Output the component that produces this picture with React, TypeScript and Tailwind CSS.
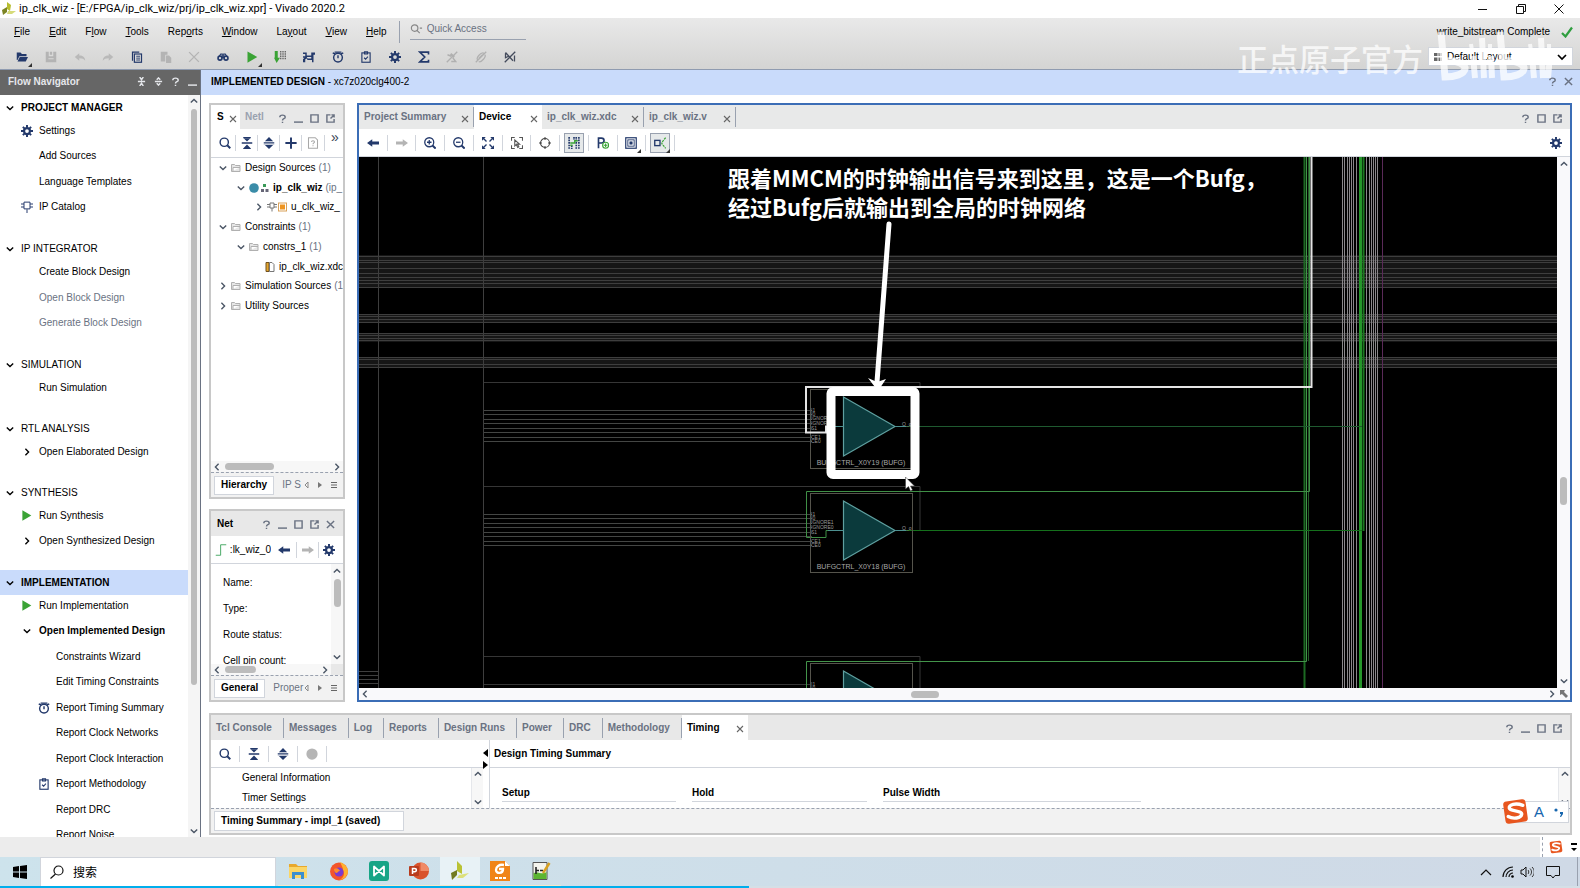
import type { ReactNode } from "react";
import clsx from "clsx";

const NAVY = "#23396b";
const GREEN = "#3aa335";

const glyphs: Record<string, ReactNode> = {
  folderOpen: (
    <g fill={NAVY}>
      <path d="M1 2h5l2 2h6v3H4.500L2 12H1z" />
      <path d="M5 8h11l-3 6H2z" />
    </g>
  ),
  save: <path fill="#b4b4b4" d="M1 1h4v6h6V1h4v14H1zM6.500 1h3v4h-3zM4.500 9.500v1.500h7V9.500z" fillRule="evenodd" />,
  undo: <path fill="#b9b9b9" d="M1 8l6-5v3c5 0 7.500 2 8 7-1.500-2.500-4-3.500-8-3.500V13z" />,
  redo: <path fill="#b9b9b9" d="M15 8L9 3v3c-5 0-7.500 2-8 7 1.500-2.500 4-3.500 8-3.500V13z" />,
  copy: (
    <g stroke={NAVY} fill="none" strokeWidth="1.600">
      <path d="M11 1.500H2v11.500" />
      <rect x="4.500" y="4" width="9.500" height="11" />
      <path d="M7 7h5M7 9.500h5M7 12h5" strokeWidth="1.200" />
    </g>
  ),
  paste: <path fill="#b4b4b4" d="M1 1h9v4H7v9H1zM8 6h4l3 3v7H8z" />,
  cross: <path stroke="#b4b4b4" strokeWidth="1.800" d="M1.500 1.500l13 13M14.500 1.500l-13 13" />,
  binoculars: (
    <g fill="none" stroke={NAVY} strokeWidth="2.200">
      <circle cx="4" cy="9.500" r="2.600" />
      <circle cx="12" cy="9.500" r="2.600" />
      <path d="M3 7l2-3h2v5h2V4h2l2 3" strokeWidth="1.600" />
    </g>
  ),
  play: <path fill={GREEN} d="M2 .5L15 8 2 15.500z" />,
  bitstream: (
    <g>
      <path fill={GREEN} d="M1 0h4v9h3l-4.500 7L0 9h1z" />
      <path stroke="#555" strokeWidth="1.600" strokeDasharray="2 1" d="M9 0v12M12 0v12M15 0v12" />
    </g>
  ),
  hardware: (
    <g fill={NAVY}>
      <path d="M0 2h5v4h6V2h5v3h-2v10h-2v-3H6l-1-2-2 1v4H0v-4l2-2H0V7h3V4H0z" />
      <path fill="#e0e0e0" d="M5 8h6v2H6z" />
    </g>
  ),
  clock: (
    <g stroke={NAVY} strokeWidth="1.900" fill="none">
      <circle cx="8" cy="8.800" r="5.800" />
      <path d="M8 5.500v4M1 2.500l3 1.500M15 2.500L12 4M3.500 1.500h9" />
    </g>
  ),
  clipboard: (
    <g stroke={NAVY} strokeWidth="1.500" fill="none">
      <rect x="2.500" y="2.500" width="11" height="12.500" />
      <path d="M6 1h4v3H6zM5.500 9l2 2 3-3.500" />
    </g>
  ),
  gear: (
    <g>
      <circle cx="8" cy="8" r="4" fill="none" stroke={NAVY} strokeWidth="3" />
      <path
        stroke={NAVY}
        strokeWidth="2.600"
        d="M8 0v3.500M8 12.500v3.500M0 8h3.500M12.500 8h3.500M2.500 2.500l2 2M11.500 11.500l2 2M13.500 2.500l-2 2M4.500 11.500l-2 2"
      />
    </g>
  ),
  sigma: <path fill="none" stroke={NAVY} strokeWidth="2.200" d="M14 4.500V1.500H2.500L9 8l-6.500 6.500H14v-3" />,
  noPen: (
    <g stroke="#b0b0b0" strokeWidth="1.800" fill="none">
      <path d="M1 15L15 1M2 5l5 2M9 9l4 5H7" />
      <path d="M6 4l5 4" strokeWidth="3" />
    </g>
  ),
  noLink: (
    <g stroke="#b0b0b0" strokeWidth="1.700" fill="none">
      <path d="M1 15L15 1M4 12c-4-2 4-11 8-9M13 5c3 2-5 11-8 9M5 10l5-5" />
    </g>
  ),
  noMark: (
    <g stroke="#444b5c" strokeWidth="1.700" fill="none">
      <path d="M1 15L15 1M2 2l10 11M2 3v6l4-2M14 6v8" />
    </g>
  ),
  search: (
    <g stroke={NAVY} strokeWidth="1.900" fill="none">
      <circle cx="7" cy="7" r="5.500" />
      <path d="M11 11l4 4" strokeWidth="2.600" />
    </g>
  ),
  collapse: (
    <g fill={NAVY}>
      <path d="M1 7h14v2H1zM3 0h10v1.500H3zM3 14.500h10V16H3z" />
      <path d="M3.500 1.500h9L8 6zM3.500 14.500h9L8 10z" />
    </g>
  ),
  expand: (
    <g fill={NAVY}>
      <path d="M2.500 5.500L8 0l5.500 5.500zM2.500 10.500L8 16l5.500-5.500zM1 6.500h14v1H1zM1 8.500h14v1H1z" />
    </g>
  ),
  plus: <path stroke={NAVY} strokeWidth="2.600" d="M8 .5v15M.5 8h15" />,
  unknown: (
    <g stroke="#a8a8a8" strokeWidth="1.400" fill="none">
      <path d="M2 1h9l3 3v11H2z" />
      <path d="M6 6.500c0-2 4-2 4 0 0 1.500-2 1.300-2 3M8 11v1.300" />
    </g>
  ),
  dot: <circle cx="8" cy="8" r="7.500" fill="#b5b5b5" />,
  back: <path fill={NAVY} d="M0 8l7-5v3h9v4H7v3z" />,
  forward: <path fill="#b4b4b4" d="M16 8L9 3v3H0v4h9v3z" />,
  zoomIn: (
    <g stroke={NAVY} strokeWidth="1.700" fill="none">
      <circle cx="7" cy="7" r="6" />
      <path d="M7 4v6M4 7h6" />
      <path d="M11 11l4.500 4.500" strokeWidth="2.600" />
    </g>
  ),
  zoomOut: (
    <g stroke={NAVY} strokeWidth="1.700" fill="none">
      <circle cx="7" cy="7" r="6" />
      <path d="M4 7h6" />
      <path d="M11 11l4.500 4.500" strokeWidth="2.600" />
    </g>
  ),
  fit: (
    <g>
      <path fill={NAVY} d="M0 0h5L0 5zM16 0h-5l5 5zM0 16h5l-5-5zM16 16h-5l5-5z" />
      <path stroke={NAVY} strokeWidth="1.800" d="M2 2l4 4M14 2l-4 4M2 14l4-4M14 14l-4-4" />
    </g>
  ),
  fitSelection: (
    <g stroke="#555" strokeWidth="1.400" fill="none">
      <path d="M.7 5V.7H5M15.300 5V.7H11M.7 11v4.300H5M15.300 11v4.300H11" />
      <path d="M5 4v8l2-2 2 4 1.500-1-2-3.500h3z" />
    </g>
  ),
  target: (
    <g stroke="#444" strokeWidth="1.400" fill="none">
      <circle cx="8" cy="8" r="6" />
      <path d="M8 0v4M8 12v4M0 8h4M12 8h4" />
    </g>
  ),
  routing: (
    <g fill="none">
      <path stroke={NAVY} strokeWidth="2.200" strokeDasharray="2.200 1.200" d="M1.500 0v16M8 0v4M14.500 0v16M5 11v5M11 0v16" />
      <path stroke={GREEN} strokeWidth="1.800" d="M3 8h6V5h4M3 11h3" />
    </g>
  ),
  place: (
    <g fill="none">
      <path stroke={NAVY} strokeWidth="2.200" d="M2 15V1.500h4c4.500 0 4.500 6.500 0 6.500H2" />
      <circle cx="11.500" cy="11" r="4" fill="#fff" stroke={GREEN} strokeWidth="1.500" />
      <path stroke={GREEN} strokeWidth="1.500" d="M11.500 8.500v5M9 11h5" />
    </g>
  ),
  chip: (
    <g stroke={NAVY} fill="none">
      <rect x="1" y="1" width="14" height="14" strokeWidth="1.600" />
      <rect x="3.800" y="3.800" width="8.400" height="8.400" strokeWidth="1.200" />
      <rect x="6.500" y="6.500" width="3" height="3" fill={NAVY} />
    </g>
  ),
  fanout: (
    <g fill="none">
      <rect x="1" y="4.500" width="7" height="7" stroke={NAVY} strokeWidth="1.800" />
      <path stroke={GREEN} strokeWidth="1.600" d="M15.500 1l-5 6v2l5 6" strokeDasharray="3 1" />
    </g>
  ),
  ip: (
    <g stroke={NAVY} strokeWidth="1.300" fill="none">
      <path d="M4 1.500h8v9H4zM0 4h4M0 8h4M12 4h4M12 8h4M8 11v5" />
    </g>
  ),
  edge: <path fill="none" stroke="#3aa35a" strokeWidth="1.200" d="M1 15h6.500V1H15" />,
};

function Icon({ name, className = "size-3" }: { name: string; className?: string }) {
  return (
    <svg viewBox="0 0 16 16" className={clsx("shrink-0", className)} aria-hidden="true">
      {glyphs[name]}
    </svg>
  );
}

function Chevron({ dir, className = "size-2" }: { dir: "up" | "down" | "left" | "right"; className?: string }) {
  const d = {
    up: "M1 7l4-4 4 4",
    down: "M1 3l4 4 4-4",
    left: "M7 1L3 5l4 4",
    right: "M3 1l4 4-4 4",
  }[dir];
  return (
    <svg viewBox="0 0 10 10" className={clsx("shrink-0", className)} aria-hidden="true">
      <path d={d} fill="none" stroke="currentColor" strokeWidth="1.700" />
    </svg>
  );
}

function MenuCorner() {
  return (
    <svg viewBox="0 0 4 4" className="absolute -right-1 -bottom-1 size-1" aria-hidden="true">
      <path d="M4 0v4H0z" fill="#333" />
    </svg>
  );
}

const controlPaths: Record<string, string> = {
  Help: "M2 3.500C2 .5 8 .5 8 3.500 8 5.500 5 5 5 7.200M5 8.500V10",
  Minimize: "M0 9h10",
  Maximize: "M1 1h8v8H1z",
  Float: "M5 1H1v8h8V5.500M5 5l4-4M6 1h3v3",
  Close: "M1 1l8 8M9 1L1 9",
  Collapse: "M1 5h8M3 0l2 3 2-3M3 10l2-3 2 3",
  Expand: "M1 5h8M3 3l2-2 2 2M3 7l2 2 2-2",
};

function Controls({ names, className }: { names: string[]; className?: string }) {
  return (
    <div className={clsx("flex items-center", className)}>
      {names.map((n) => (
        <button key={n} aria-label={n} className="flex h-4 w-4 items-center justify-center">
          <svg viewBox="0 0 10 10" className="size-[9px]">
            <path d={controlPaths[n]} fill="none" stroke="currentColor" strokeWidth="1.600" />
          </svg>
        </button>
      ))}
    </div>
  );
}

function TabClose({ label }: { label: string }) {
  return (
    <button aria-label={label} className="pt-[3px]">
      <svg viewBox="0 0 8 8" className="size-2">
        <path d="M1 1l6 6M7 1L1 7" stroke="#666" strokeWidth="1.100" />
      </svg>
    </button>
  );
}

function ToolButton({ name, label, className }: { name: string; label: string; className?: string }) {
  return (
    <div className={clsx("flex h-4 items-center justify-center border-r border-gray-300", className)}>
      <button aria-label={label}>
        <Icon name={name} />
      </button>
    </div>
  );
}

function VScroll({ children }: { children?: ReactNode }) {
  return (
    <div className="flex w-3 shrink-0 flex-col items-center justify-between border-l border-gray-200 bg-[#f7f7f7] py-0.5 text-gray-600">
      <Chevron dir="up" />
      {children}
      <Chevron dir="down" />
    </div>
  );
}

const menus = [
  ["", "F", "ile"],
  ["", "E", "dit"],
  ["F", "l", "ow"],
  ["", "T", "ools"],
  ["Rep", "o", "rts"],
  ["", "W", "indow"],
  ["La", "y", "out"],
  ["", "V", "iew"],
  ["", "H", "elp"],
];

const tools = [
  ["folderOpen", "Open", "menu"],
  ["save", "Save"],
  ["undo", "Undo"],
  ["redo", "Redo"],
  ["copy", "Copy"],
  ["paste", "Paste"],
  ["cross", "Delete"],
  ["binoculars", "Find"],
  ["play", "Run", "menu"],
  ["bitstream", "Generate Bitstream"],
  ["hardware", "Open Hardware"],
  ["clock", "Timing"],
  ["clipboard", "Methodology"],
  ["gear", "Settings"],
  ["sigma", "Report"],
  ["noPen", "Unhighlight"],
  ["noLink", "Unlink"],
  ["noMark", "Unmark"],
];

type NavItem = { label: string; icon?: string; arrow?: "right" | "down"; muted?: boolean; bold?: boolean; sub?: boolean };

const sections: { title: string; bold?: boolean; active?: boolean; height: string; items: NavItem[] }[] = [
  {
    title: "PROJECT MANAGER",
    bold: true,
    height: "h-[102px]",
    items: [
      { label: "Settings", icon: "gear" },
      { label: "Add Sources" },
      { label: "Language Templates" },
      { label: "IP Catalog", icon: "ip" },
    ],
  },
  {
    title: "IP INTEGRATOR",
    height: "h-[77px]",
    items: [
      { label: "Create Block Design" },
      { label: "Open Block Design", muted: true },
      { label: "Generate Block Design", muted: true },
    ],
  },
  { title: "SIMULATION", height: "h-[25px]", items: [{ label: "Run Simulation" }] },
  { title: "RTL ANALYSIS", height: "h-[25px]", items: [{ label: "Open Elaborated Design", arrow: "right" }] },
  {
    title: "SYNTHESIS",
    height: "h-[51px]",
    items: [
      { label: "Run Synthesis", icon: "play" },
      { label: "Open Synthesized Design", arrow: "right" },
    ],
  },
  {
    title: "IMPLEMENTATION",
    bold: true,
    active: true,
    height: "h-[255px]",
    items: [
      { label: "Run Implementation", icon: "play" },
      { label: "Open Implemented Design", arrow: "down", bold: true },
      { label: "Constraints Wizard", sub: true },
      { label: "Edit Timing Constraints", sub: true },
      { label: "Report Timing Summary", icon: "clock", sub: true },
      { label: "Report Clock Networks", sub: true },
      { label: "Report Clock Interaction", sub: true },
      { label: "Report Methodology", icon: "clipboard", sub: true },
      { label: "Report DRC", sub: true },
      { label: "Report Noise", sub: true },
    ],
  },
];

function TitleBar() {
  return (
    <div className="flex h-[18px] shrink-0 items-center bg-white">
      <svg viewBox="0 0 16 16" className="ml-px size-4" aria-hidden="true">
        <path fill="#b7bd2f" d="M6 1l4 3-1 6-3-2z" />
        <path fill="#7c8424" d="M1 9l5-3v5l-4 3z" />
        <path fill="#d6db7a" d="M7 10h8l-4 3H6z" />
      </svg>
      <span className="ml-0.5 text-[11px] [font-family:Roboto,'Noto_Sans',sans-serif]">
        ip_clk_wiz - [E:/FPGA/ip_clk_wiz/prj/ip_clk_wiz.xpr] - Vivado 2020.2
      </span>
      <div className="ml-auto flex items-center gap-7 pr-4">
        <button aria-label="Minimize window" className="size-[10px]">
          <svg viewBox="0 0 10 10"><path d="M0 5.500h9" stroke="#111" /></svg>
        </button>
        <button aria-label="Restore window" className="size-[10px]">
          <svg viewBox="0 0 10 10"><path d="M.5 2.500h7v7h-7zM2.500 2.500v-2h7v7h-2" fill="none" stroke="#111" /></svg>
        </button>
        <button aria-label="Close window" className="size-[10px]">
          <svg viewBox="0 0 10 10"><path d="M.5.5l9 9M9.500.5l-9 9" stroke="#111" /></svg>
        </button>
      </div>
    </div>
  );
}

function TopBar() {
  return (
    <div className="flex h-[52px] shrink-0 justify-between border-b border-[#8f9bb0] bg-linear-to-b from-[#e9e9e9] to-[#d4d4d3]">
      <div>
        <div className="flex h-[27px] items-center">
          <nav className="flex gap-[19px] pl-[14px]">
            {menus.map(([a, b, c]) => (
              <button key={a + b + c}>
                {a}
                <span className="underline">{b}</span>
                {c}
              </button>
            ))}
          </nav>
          <div className="ml-3 h-[22px] border-l border-gray-400" />
          <label className="mb-1 ml-[10px] flex h-5 w-[116px] items-center gap-1 border-b border-gray-400 text-gray-500">
            <svg viewBox="0 0 14 12" className="h-3 w-[13px] shrink-0" aria-hidden="true">
              <circle cx="5" cy="5" r="3.500" fill="none" stroke="#888" strokeWidth="1.300" />
              <path d="M7.500 7.500l3 3M10.500 5h2.500" stroke="#888" strokeWidth="1.300" />
            </svg>
            <input
              aria-label="Quick Access"
              placeholder="Quick Access"
              className="w-24 bg-transparent outline-none placeholder:text-gray-500"
            />
          </label>
        </div>
        <div className="flex h-6 w-[524px] items-center pl-2">
          {tools.map(([icon, label, menu]) => (
            <div key={icon} className="flex flex-1 justify-center">
              <button aria-label={label} className="relative">
                <Icon name={icon} />
                {menu && <MenuCorner />}
              </button>
            </div>
          ))}
        </div>
      </div>
      <div className="flex flex-col items-end pr-[7px]">
        <div className="flex h-[27px] items-center gap-[11px]">
          <span>write_bitstream Complete</span>
          <svg viewBox="0 0 12 12" className="size-3" aria-hidden="true">
            <path d="M1 7l3.500 3.500L11 1.500" fill="none" stroke="#2f9e3f" strokeWidth="2.200" />
          </svg>
        </div>
        <div className="relative mt-0.5 flex items-center">
          <svg viewBox="0 0 8 8" className="absolute left-1.5 size-2" aria-hidden="true">
            <path fill="#666" d="M0 0h3.500v3H0zM4.500 0H8v3H4.500zM0 4.500h3.500V8H0zM4.500 4.500H8V8H4.500z" />
          </svg>
          <select
            aria-label="Layout"
            className="h-[19px] w-[145px] appearance-none border border-gray-300 bg-white pl-[18px] outline-none"
          >
            <option>Default Layout</option>
          </select>
          <Chevron dir="down" className="absolute right-1.5 size-2.5" />
        </div>
      </div>
    </div>
  );
}

function FlowNavigator() {
  return (
    <aside className="flex w-[201px] shrink-0 flex-col border-r border-gray-500 bg-white">
      <div className="flex h-[25px] shrink-0 items-center justify-between bg-[#666] pb-0.5 pl-2 font-bold text-gray-200">
        Flow Navigator
        <Controls names={["Collapse", "Expand", "Help", "Minimize"]} className="gap-px" />
      </div>
      <div className="flex min-h-0 flex-1">
        <div className="min-w-0 flex-1 overflow-hidden">
          {sections.map((s) => (
            <section key={s.title} className="mb-4">
              <h2
                className={clsx(
                  "flex h-[25px] items-center gap-[7px] pl-1.5",
                  s.bold && "font-bold",
                  s.active && "bg-[#c9dbfb]"
                )}
              >
                <Chevron dir="down" />
                {s.title}
              </h2>
              <ul className={clsx("-mt-0.5 flex flex-col", s.height)}>
                {s.items.map((it) => (
                  <li key={it.label} className={clsx("flex flex-1 items-center", it.sub ? "pl-[38px]" : "pl-[21px]")}>
                    <span className="flex w-[18px] shrink-0 items-center">
                      {it.icon && <Icon name={it.icon} className={it.icon === "play" ? "size-[11px]" : "size-3"} />}
                      {it.arrow && <Chevron dir={it.arrow} className="ml-0.5 size-2" />}
                    </span>
                    <a href="#" className={clsx("whitespace-nowrap", it.muted && "text-gray-500", it.bold && "font-bold")}>
                      {it.label}
                    </a>
                  </li>
                ))}
              </ul>
            </section>
          ))}
        </div>
        <div className="flex w-3 flex-col items-center bg-[#f5f5f5] py-0.5 text-gray-600">
          <Chevron dir="up" />
          <div className="mt-1 h-[576px] w-1.5 rounded-full bg-[#bcbcbc]" />
          <Chevron dir="down" className="mt-auto size-2" />
        </div>
      </div>
    </aside>
  );
}

type TreeRow = { label: string; count?: string; indent: string; open?: boolean; leaf?: boolean; kind: string; bold?: boolean };

const tree: TreeRow[] = [
  { label: "Design Sources", count: "(1)", indent: "pl-2", open: true, kind: "folder" },
  { label: "ip_clk_wiz", count: "(ip_", indent: "pl-[26px]", open: true, kind: "top", bold: true },
  { label: "u_clk_wiz_", indent: "pl-[44px]", kind: "ip" },
  { label: "Constraints", count: "(1)", indent: "pl-2", open: true, kind: "folder" },
  { label: "constrs_1", count: "(1)", indent: "pl-[26px]", open: true, kind: "folder" },
  { label: "ip_clk_wiz.xdc", indent: "pl-[44px]", leaf: true, kind: "xdc" },
  { label: "Simulation Sources", count: "(1", indent: "pl-2", kind: "folder" },
  { label: "Utility Sources", indent: "pl-2", kind: "folder" },
];

function TreeIcon({ kind }: { kind: string }) {
  if (kind === "top") {
    return (
      <svg viewBox="0 0 20 10" className="h-[10px] w-5 shrink-0" aria-hidden="true">
        <circle cx="5" cy="5" r="4.800" fill="#3a8ca8" />
        <path fill="#3a9a58" d="M14 1h3v3h-3z" />
        <path fill="#667" d="M12 6h3v3h-3zM16.500 6h3v3h-3z" />
      </svg>
    );
  }
  if (kind === "ip") {
    return (
      <svg viewBox="0 0 20 10" className="h-[10px] w-5 shrink-0" aria-hidden="true">
        <path d="M3 1h4v5H3zM0 2.500h3M0 5h3M7 2.500h3M7 5h3M5 6v3.500" fill="none" stroke="#777" />
        <rect x="11.500" y="1" width="8" height="8" fill="#fff" stroke="#d9a25a" />
        <rect x="13" y="2.500" width="5" height="5" fill="#ee9420" />
      </svg>
    );
  }
  if (kind === "xdc") {
    return (
      <svg viewBox="0 0 10 10" className="ml-1 size-[10px] shrink-0" aria-hidden="true">
        <path d="M1 .5h3v9H1z" fill="#e3a62e" stroke="#705020" />
        <path d="M4.500.5H7l2 2v7H4.500z" fill="#fff" stroke="#777" />
      </svg>
    );
  }
  return (
    <svg viewBox="0 0 10 8" className="h-2 w-[10px] shrink-0" aria-hidden="true">
      <path d="M.5 7.500v-7h3l1 1H9v2M.5 7.500h8.500v-4H2v4" fill="#e6e6e6" stroke="#b0b0b0" />
    </svg>
  );
}

function BottomTabs({ active, next }: { active: string; next: string }) {
  return (
    <div className="flex h-[25px] shrink-0 items-center border-t border-dashed border-gray-400 bg-[#f2f2f2] pl-[3px] text-gray-500">
      <button className="h-[19px] shrink-0 border border-gray-300 bg-white px-1.5 font-bold text-black">{active}</button>
      <button className="ml-2 min-w-0 flex-1 overflow-hidden text-left whitespace-nowrap">{next}</button>
      <svg viewBox="0 0 34 8" className="mr-[5px] h-2 w-[34px] shrink-0" aria-hidden="true">
        <path d="M4 1L1 4l3 3z" fill="none" stroke="#888" />
        <path d="M14 1l4 3-4 3z" fill="#777" />
        <path d="M27 1.500h6M27 4h6M27 6.500h6" stroke="#666" />
      </svg>
    </div>
  );
}

function HScroll({ thumb }: { thumb: string }) {
  return (
    <div className="flex h-[11px] flex-1 items-center bg-[#f7f7f7] px-0.5 text-gray-600">
      <Chevron dir="left" />
      <div className={clsx("ml-1 h-[7px] rounded-full bg-[#bcbcbc]", thumb)} />
      <Chevron dir="right" className="ml-auto size-2" />
    </div>
  );
}

function SourcesPanel() {
  return (
    <div className="flex min-h-0 flex-1 flex-col border-2 border-[#c8c8c8] bg-white">
      <div className="flex h-6 shrink-0 items-center bg-[#e8e8e8] text-gray-500">
        <div className="flex h-full w-[29px] items-center justify-between bg-white pr-[3px] pl-1.5">
          <span className="font-bold text-black">S</span>
          <TabClose label="Close Sources" />
        </div>
        <span className="ml-[5px] font-bold text-gray-400">Netl</span>
        <Controls names={["Help", "Minimize", "Maximize", "Float"]} className="mr-[5px] ml-auto pt-0.5" />
      </div>
      <div className="flex h-[29px] shrink-0 items-center border-b border-gray-300">
        <ToolButton name="search" label="Search" className="w-[25px] pl-1" />
        <ToolButton name="collapse" label="Collapse All" className="w-[22px]" />
        <ToolButton name="expand" label="Expand All" className="w-[22px]" />
        <ToolButton name="plus" label="Add Sources" className="w-[22px]" />
        <ToolButton name="unknown" label="Missing Sources" className="w-[23px]" />
        <span className="mb-3 ml-1.5 text-[14px] leading-3 text-gray-700">»</span>
      </div>
      <ul className="flex h-[158px] flex-col overflow-hidden">
        {tree.map((r) => (
          <li key={r.label} className={clsx("flex flex-1 items-center gap-1 whitespace-nowrap", r.indent)}>
            {!r.leaf ? (
              <Chevron dir={r.open ? "down" : "right"} className="size-2 text-gray-600" />
            ) : (
              <span className="w-2" />
            )}
            <TreeIcon kind={r.kind} />
            <span className={clsx(r.bold && "font-bold")}>{r.label}</span>
            {r.count && <span className="-ml-px text-gray-500">{r.count}</span>}
          </li>
        ))}
      </ul>
      <div className="mt-auto flex">
        <HScroll thumb="w-[49px]" />
      </div>
      <BottomTabs active="Hierarchy" next="IP S" />
    </div>
  );
}

function NetPanel() {
  return (
    <div className="flex h-[193px] shrink-0 flex-col border-2 border-[#c8c8c8] bg-white">
      <div className="flex h-[25px] shrink-0 items-center justify-between bg-[#e8e8e8] pl-1.5 text-gray-500">
        <span className="font-bold text-black">Net</span>
        <Controls names={["Help", "Minimize", "Maximize", "Float", "Close"]} className="mr-[5px] pt-0.5" />
      </div>
      <div className="flex h-7 shrink-0 items-center border-b border-gray-300 pl-1">
        <Icon name="edge" />
        <span className="ml-0.5 flex w-[42px] justify-end overflow-hidden whitespace-nowrap">:lk_wiz_0</span>
        <ToolButton name="back" label="Previous" className="w-[26px]" />
        <ToolButton name="forward" label="Next" className="w-[22px]" />
        <button aria-label="Net Settings" className="ml-1">
          <Icon name="gear" />
        </button>
      </div>
      <div className="flex min-h-0 flex-1">
        <dl className="flex-1 overflow-hidden pt-1.5 pl-3">
          {["Name:", "Type:", "Route status:", "Cell pin count:"].map((t) => (
            <dt key={t} className="flex h-[26px] items-center">
              {t}
            </dt>
          ))}
        </dl>
        <div className="flex w-3 flex-col items-center bg-[#f7f7f7] py-[3px] text-gray-600">
          <Chevron dir="up" />
          <div className="mt-1 h-7 w-[7px] rounded-full bg-[#bcbcbc]" />
          <Chevron dir="down" className="mt-auto size-2" />
        </div>
      </div>
      <div className="flex shrink-0 bg-[#e8e8e8] pr-3">
        <HScroll thumb="w-[31px]" />
      </div>
      <BottomTabs active="General" next="Proper" />
    </div>
  );
}

const hLines = [257, 261, 263, 269, 274, 278, 281, 284, 288, 315, 317, 320, 323, 334, 336, 339, 341, 358, 360, 365, 368];
const busOne = [411, 415, 420, 424, 429, 433, 438, 442];
const busTwo = [515, 519, 524, 528, 533, 537, 542, 546];
const greyWires = [1342, 1344, 1347, 1349, 1351, 1353, 1356, 1366, 1369, 1371, 1373, 1375, 1377];

function Bufg({ y, label }: { y: number; label: string }) {
  return (
    <g>
      <rect x="810.500" y={y - 36.5} width="102" height="79" fill="none" stroke="#55544c" />
      <path d={`M843.500 ${y - 29}v59l51.500-29.500z`} fill="#0b3a3c" stroke="#5fa0a0" strokeWidth="1.200" />
      <path d={`M828 ${y + 0.5}h15.500M895 ${y + 0.5}h11`} stroke="#4d9090" />
      <text x="861" y={y + 39} textAnchor="middle" fontSize="7" fill="#a8a8a8">
        {label}
      </text>
      <g fill="#9a9a9a" fontSize="5">
        <text x="811" y={y - 14}>I1</text>
        <text x="811" y={y - 10}>I0</text>
        <text x="811" y={y - 6}>IGNORE1</text>
        <text x="811" y={y - 1}>IGNORE0</text>
        <text x="811" y={y + 4}>S1</text>
        <text x="811" y={y + 13}>CE1</text>
        <text x="811" y={y + 17}>CE0</text>
        <text x="902" y={y}>O_o</text>
      </g>
    </g>
  );
}

function DeviceCanvas() {
  return (
    <svg
      viewBox="359 157 1198 531"
      preserveAspectRatio="xMidYMid slice"
      className="absolute inset-0 h-full w-full"
      role="img"
      aria-label="Device view"
    >
      <g fill="#161616">
        <rect x="359" y="255" width="1200" height="33" />
        <rect x="359" y="314" width="1200" height="9" />
        <rect x="359" y="333" width="1200" height="9" />
        <rect x="359" y="357" width="1200" height="11" />
      </g>
      <g stroke="#3e3e3e">
        {hLines.map((y) => (
          <path key={y} d={`M359 ${y - 0.5}h1200`} />
        ))}
        <path d="M378.500 157v531M483.500 157v531" />
        <path d="M359 671.500h20M359 675.500h20M359 679.500h20M359 683.500h20" />
        <path d="M484 382.500h436v6M484 486.500h436v44M484 656.500h436v32M484 684.500h326" fill="none" stroke="#363636" />
      </g>
      <g stroke="#444644">
        {[...busOne, ...busTwo].map((y) => (
          <path key={y} d={`M484 ${y - 0.5}h328`} />
        ))}
      </g>
      <g stroke="#8a878a">
        {greyWires.map((x) => (
          <path key={x} d={`M${x + 0.5} 157v531`} />
        ))}
      </g>
      <path d="M1382.500 157v531" stroke="#5a2a58" />
      <path d="M1360.500 157v531" stroke="#25962a" strokeWidth="3" />
      <path d="M1363.500 157v374" stroke="#1c7a20" strokeWidth="2" />

      <g fill="none">
        <path d="M1304.500 157v531" stroke="#1c6a22" strokeWidth="2" />
        <path d="M806.500 688v-26.500h500v-504.500" stroke="#43944a" />
        <path d="M1308.500 157v504" stroke="#245c28" />
        <path d="M828 530.500h-2v7h-19.500v-46h503V157" stroke="#3f8f46" />
        <path d="M906 426.500h456" stroke="#1f5a30" />
        <path d="M906 530.500h456" stroke="#15701c" />
      </g>
      <Bufg y={426} label="BUFGCTRL_X0Y19 (BUFG)" />
      <Bufg y={530} label="BUFGCTRL_X0Y18 (BUFG)" />
      <Bufg y={700} label="BUFGCTRL_X0Y17 (BUFG)" />
      <path d="M828 426.500h-2v6h-20V387h505.500V157" fill="none" stroke="#e4e4e4" strokeWidth="2" />

      <rect x="831" y="391.500" width="84" height="83" rx="2" fill="none" stroke="#fff" strokeWidth="9" />
      <path d="M889 224L877 382" stroke="#fff" strokeWidth="5" strokeLinecap="round" />
      <path d="M868 378l9 4 9-3-8 12z" fill="#fff" />
      <path d="M905.500 477v12l3-2.500 2 4.500 2-1-2-4h4z" fill="#fff" stroke="#333" strokeWidth=".5" />
    </svg>
  );
}

const deviceTabs = [
  { label: "Project Summary", width: "w-[115px]" },
  { label: "Device", width: "w-[68px]", active: true },
  { label: "ip_clk_wiz.xdc", width: "w-[102px]" },
  { label: "ip_clk_wiz.v", width: "w-[92px]" },
];

const deviceTools = [
  ["back", "Back"],
  ["forward", "Forward"],
  ["zoomIn", "Zoom In"],
  ["zoomOut", "Zoom Out"],
  ["fit", "Zoom Fit"],
  ["fitSelection", "Select Area"],
  ["target", "Auto Fit"],
  ["routing", "Routing Resources", "on"],
  ["place", "Draw Pblock"],
  ["chip", "Cell Drag Mode", "", "menu"],
  ["fanout", "Show Connections", "on", "menu"],
];

function DevicePanel() {
  return (
    <div className="flex min-w-0 flex-1 flex-col border-2 border-[#3b6db6] bg-white">
      <div className="flex h-6 shrink-0 items-center bg-[#e8e9e9] font-bold text-gray-500">
        {deviceTabs.map((t) => (
          <div
            key={t.label}
            className={clsx(
              "flex items-center justify-between pl-[5px]",
              t.width,
              t.active ? "h-full bg-white pr-1 text-black" : "h-5 border-r border-gray-400 pr-1"
            )}
          >
            <button className="whitespace-nowrap">{t.label}</button>
            <TabClose label={`Close ${t.label}`} />
          </div>
        ))}
        <Controls names={["Help", "Maximize", "Float"]} className="mr-[5px] ml-auto pt-0.5" />
      </div>
      <div className="flex h-7 shrink-0 items-center border-b border-gray-300">
        <div className="flex w-[316px] shrink-0">
          {deviceTools.map(([icon, label, on, menu]) => (
            <div key={icon} className="flex h-4 flex-1 items-center justify-center border-r border-gray-300">
              <button
                aria-label={label}
                className={clsx(
                  "flex size-5 shrink-0 items-center justify-center",
                  on && "border border-gray-400 bg-[#e6e9ea]"
                )}
              >
                <span className="relative">
                  <Icon name={icon} />
                  {menu && <MenuCorner />}
                </span>
              </button>
            </div>
          ))}
        </div>
        <button aria-label="Device Settings" className="mr-2 ml-auto">
          <Icon name="gear" />
        </button>
      </div>
      <div className="flex min-h-0 flex-1">
        <div className="relative min-w-0 flex-1 overflow-hidden bg-black">
          <DeviceCanvas />
          <p className="absolute top-1.5 left-[369px] text-[22px] leading-[29px] font-bold whitespace-nowrap text-white [font-family:'Noto_Sans_CJK_SC',sans-serif]">
            跟着MMCM的时钟输出信号来到这里，这是一个Bufg，
            <br />
            经过Bufg后就输出到全局的时钟网络
          </p>
        </div>
        <div className="flex w-[13px] flex-col items-center justify-between bg-[#f9f9fb] py-[3px] text-gray-600">
          <Chevron dir="up" />
          <div className="mt-[136px] h-7 w-[7px] rounded-full bg-[#bcbcbc]" />
          <Chevron dir="down" />
        </div>
      </div>
      <div className="flex h-3 shrink-0 items-center justify-between bg-[#f9f9fb] px-0.5 text-gray-600">
        <Chevron dir="left" />
        <div className="mr-[68px] h-[7px] w-7 rounded-full bg-[#bcbcbc]" />
        <div className="flex items-center gap-1">
          <Chevron dir="right" />
          <svg viewBox="0 0 8 8" className="size-2"><path d="M0 0h5L4 2l4 4-2 2-4-4-2 1z" fill="#777" /></svg>
        </div>
      </div>
    </div>
  );
}

const resultTabs = ["Tcl Console", "Messages", "Log", "Reports", "Design Runs", "Power", "DRC", "Methodology"];

function TimingPanel() {
  return (
    <div className="flex h-[122px] shrink-0 flex-col border-2 border-[#c8c8c8] bg-white">
      <div className="flex h-[25px] shrink-0 items-center bg-[#e8e8e8] font-bold text-gray-500">
        {resultTabs.map((t) => (
          <button key={t} className="h-5 border-r border-gray-400 pr-[11px] pl-[5px]">
            {t}
          </button>
        ))}
        <div className="flex h-full w-[66px] items-center justify-between bg-white pr-1 pl-[5px] text-black">
          <button>Timing</button>
          <TabClose label="Close Timing" />
        </div>
        <Controls names={["Help", "Minimize", "Maximize", "Float"]} className="mr-[5px] ml-auto pt-0.5" />
      </div>
      <div className="flex min-h-0 flex-1">
        <div className="flex w-[272px] shrink-0 flex-col">
          <div className="flex h-7 shrink-0 items-center border-b border-gray-300">
            <ToolButton name="search" label="Search Reports" className="w-[29px]" />
            <ToolButton name="collapse" label="Collapse Reports" className="w-[29px]" />
            <ToolButton name="expand" label="Expand Reports" className="w-[29px]" />
            <ToolButton name="dot" label="Status" className="w-[29px]" />
          </div>
          <div className="flex min-h-0 flex-1">
            <ul className="flex-1 pl-[31px]">
              <li className="flex h-5 items-center">General Information</li>
              <li className="flex h-5 items-center">Timer Settings</li>
            </ul>
            <VScroll />
          </div>
        </div>
        <div className="flex w-[7px] flex-col gap-1 border-r border-gray-300 pt-[9px]">
          <svg viewBox="0 0 5 8" className="h-2 w-[5px]"><path d="M5 0v8L0 4z" /></svg>
          <svg viewBox="0 0 5 8" className="h-2 w-[5px]"><path d="M0 0v8l5-4z" /></svg>
        </div>
        <div className="flex min-w-0 flex-1 flex-col font-bold">
          <h3 className="flex h-7 shrink-0 items-center border-b border-gray-300 pl-1">Design Timing Summary</h3>
          <div className="flex min-h-0 flex-1">
            <div className="flex flex-1 gap-4 pt-[17px] pl-3">
              <div className="h-[17px] w-[174px] border-b border-gray-300">Setup</div>
              <div className="h-[17px] w-[175px] border-b border-gray-300">Hold</div>
              <div className="h-[17px] w-[258px] border-b border-gray-300">Pulse Width</div>
            </div>
            <VScroll />
          </div>
        </div>
      </div>
      <div className="flex h-[25px] shrink-0 items-center border-t border-dashed border-gray-400 bg-[#f2f2f2] pl-[3px]">
        <button className="h-5 w-[190px] border border-gray-300 bg-white pl-1.5 text-left font-bold whitespace-nowrap">
          Timing Summary - impl_1 (saved)
        </button>
      </div>
    </div>
  );
}

function Sogou({ className }: { className: string }) {
  return (
    <svg viewBox="0 0 24 24" className={className} aria-hidden="true">
      <rect x="2" y="2" width="20" height="20" rx="3" fill="#e8561f" transform="rotate(-8 12 12)" />
      <path
        d="M18.500 6.500C12 4 6 6 6.500 9s11.500 2 11 5.500S10 19 5.500 16.500"
        fill="none"
        stroke="#fff"
        strokeWidth="3"
        strokeLinecap="round"
      />
    </svg>
  );
}

function StatusBar() {
  return (
    <div className="flex h-5 shrink-0 items-center bg-[#ececec]">
      <div className="ml-auto flex h-full w-10 items-center gap-1.5 bg-white pl-[2px]">
        <div className="h-full border-l border-dashed border-gray-400" />
        <Sogou className="size-3.5" />
        <svg viewBox="0 0 6 10" className="ml-0.5 h-[10px] w-1.5"><path d="M0 1h6v2H0zM0 6h6L3 9z" /></svg>
      </div>
    </div>
  );
}

const apps: { name: string; active?: boolean; art: ReactNode }[] = [
  {
    name: "File Explorer",
    art: (
      <>
        <path fill="#e8a92d" d="M1 3h7l2 2h9v12H1z" />
        <path fill="#fbd667" d="M1 6h18v11H1z" />
        <path fill="#3b8fd0" d="M4 11h12v7h-3v-4H7v4H4z" />
      </>
    ),
  },
  {
    name: "Firefox",
    art: (
      <>
        <circle cx="10" cy="10.500" r="9" fill="#f3552b" />
        <path fill="#ffb02e" d="M11 1c5 2 8 5 8 10-1 5-5 8-9 8 5-2 6-6 4-10 0-3-2-5-3-8z" />
        <circle cx="10" cy="11" r="4.500" fill="#7a3bd0" />
        <path fill="#ff8a2a" d="M5 8c3-2 5 0 6 2-2 0-2 1-3 2-2 0-3-2-3-4z" />
      </>
    ),
  },
  {
    name: "Nutstore",
    art: (
      <>
        <rect width="20" height="20" rx="3" fill="#17a586" />
        <path fill="none" stroke="#fff" strokeWidth="1.800" strokeLinejoin="round" d="M5 5.500v9l10-9v9zM5 5.500l10 9" />
      </>
    ),
  },
  {
    name: "PowerPoint",
    art: (
      <>
        <circle cx="11.500" cy="10" r="8.500" fill="#d9532c" />
        <path fill="#f08a66" d="M11.500 1.500A8.500 8.500 0 0120 10h-8.500z" />
        <rect x="0" y="5" width="10" height="10" rx="1" fill="#b83b1d" />
        <path fill="none" stroke="#fff" strokeWidth="1.500" d="M3.500 13V7.500h2c2.500 0 2.500 3.200 0 3.200h-2" />
      </>
    ),
  },
  {
    name: "Vivado",
    active: true,
    art: (
      <>
        <path fill="#b9c235" d="M7 0l5 5v8l-5-3z" />
        <path fill="#727b22" d="M1 12l6-3v5l-5 5z" />
        <path fill="#dce07a" d="M9 14l10-2-6 5H7z" />
      </>
    ),
  },
  {
    name: "Foxit PDF",
    art: (
      <>
        <path fill="#f08418" d="M0 0h15l5 5v15H0z" />
        <path fill="#fff" d="M15 0l5 5h-5z" />
        <path fill="none" stroke="#fff" strokeWidth="2.400" d="M14 4c-5-1-8 2-8 5 0 4 7 4 7-1H9" />
        <path stroke="#fff" strokeWidth="2" strokeDasharray="3 1" d="M5 17h11" />
      </>
    ),
  },
  {
    name: "Notepad++",
    art: (
      <>
        <path fill="#f4f4ee" stroke="#555" d="M2 1.500h14v17H2z" />
        <path fill="#5cb531" d="M2.500 12c4-2 9 2 13-1v7h-13z" />
        <path stroke="#222" strokeWidth="1.600" d="M5 6v7M5 9.500h3M9 9.500h3" />
        <path stroke="#d8a020" strokeWidth="2.400" d="M18.500 2L12 12" />
      </>
    ),
  },
];

function Taskbar() {
  return (
    <div className="relative flex h-[31px] shrink-0 items-center bg-linear-to-r from-[#cde3ec] to-[#cfd9e6] pb-0.5">
      <button aria-label="Start" className="flex w-10 justify-center">
        <svg viewBox="0 0 14 14" className="size-[14px]">
          <path d="M0 2l6-1v5.500H0zM7 1l7-1v6.500H7zM0 7.500h6V13l-6-1zM7 7.500h7V14l-7-1z" />
        </svg>
      </button>
      <label className="flex h-full w-[236px] items-center gap-[9px] border-x border-t border-gray-300 bg-white pl-[9px]">
        <svg viewBox="0 0 14 14" className="size-[14px] shrink-0" aria-hidden="true">
          <circle cx="8.500" cy="5.500" r="4.500" fill="none" stroke="#111" strokeWidth="1.200" />
          <path d="M5.500 9L.5 13.500" stroke="#111" strokeWidth="1.200" />
        </svg>
        <input
          aria-label="搜索"
          placeholder="搜索"
          className="w-40 text-[12px] outline-none placeholder:text-black [font-family:'Noto_Sans_CJK_SC',sans-serif]"
        />
      </label>
      <div className="ml-[2px] flex h-full w-[283px]">
        {apps.map((a) => (
          <button
            key={a.name}
            aria-label={a.name}
            className={clsx("flex h-full flex-1 items-center justify-center border-b border-[#f3e9c8]", a.active && "bg-[#e8f2f6]")}
          >
            <svg viewBox="0 0 20 20" className="size-5">
              {a.art}
            </svg>
          </button>
        ))}
      </div>
      <div className="mr-0.5 ml-auto flex h-full items-center gap-2 border-r border-gray-400 pr-[17px]">
        <svg viewBox="0 0 12 12" className="size-3"><path d="M1 9l5-5 5 5" fill="none" stroke="#111" strokeWidth="1.200" /></svg>
        <svg viewBox="0 0 12 12" className="ml-0.5 size-3">
          <path d="M1 11A10 10 0 0111 1M4 11a7 7 0 017-7M7 11a4 4 0 014-4" fill="none" stroke="#111" strokeWidth="1.200" />
          <circle cx="10.500" cy="10.500" r="1.300" />
        </svg>
        <svg viewBox="0 0 14 12" className="-ml-0.5 h-3 w-[14px]">
          <path d="M1 4h2l3-3v10L3 8H1z" fill="none" stroke="#111" />
          <path d="M8 4c1 1 1 3 0 4M10 2.500c2 2 2 5 0 7M12 1c3 3 3 7 0 10" fill="none" stroke="#333" />
        </svg>
        <svg viewBox="0 0 14 14" className="ml-1 size-[14px]"><path d="M.5 1.500h13v9H9l-2 2.500-2-2.500H.5z" fill="none" stroke="#111" /></svg>
      </div>
      <div className="absolute inset-x-0 bottom-0 h-0.5 bg-[#d5dfe6]">
        <div className="h-full w-[47.4%] bg-[#00aeec]" />
      </div>
    </div>
  );
}

function Watermark() {
  return (
    <div className="pointer-events-none absolute top-[28px] right-[28px] flex items-center gap-[13px] text-white opacity-75">
      <span className="mt-1 text-[31px] leading-[52px] font-medium whitespace-nowrap [font-family:'Noto_Sans_CJK_SC',sans-serif]">
        正点原子官方
      </span>
      <svg viewBox="0 0 116 52" className="h-[52px] w-[116px]" aria-hidden="true">
        <g fill="none" stroke="#fff" strokeWidth="7">
          <path d="M5 2l4 45c10 0 19-3 20-8s-10-9-18-8" />
          <path d="M64 2l4 45c10 0 19-3 20-8s-10-9-18-8" />
          <path d="M37 26l2 22M46 8l2 40M55 26l1 22M96 26l2 22M105 8l2 40M114 26l-2 22" strokeWidth="6" />
          <path d="M35 14l1 7M54 14v7M94 14l1 7M113 14v7" strokeWidth="4" />
        </g>
      </svg>
    </div>
  );
}

function ImeBar() {
  return (
    <div className="absolute right-[11px] bottom-[65px] flex h-[22px] w-[60px] items-center gap-2.5 border border-gray-300 bg-white pl-4 text-[#1766ae]">
      <Sogou className="absolute -top-1 -left-2 size-[27px]" />
      <span className="ml-2 text-[15px]">A</span>
      <svg viewBox="0 0 10 10" className="size-[10px] shrink-0" aria-hidden="true">
        <circle cx="2" cy="3" r="1.600" fill="#1766ae" />
        <path d="M6 5h3v2L7 10H6l1-3H6z" fill="#1766ae" />
      </svg>
    </div>
  );
}

export default function App() {
  return (
    <div className="relative flex h-screen flex-col overflow-hidden bg-white text-[10px] leading-4 text-black [font-family:'Liberation_Sans',Arial,sans-serif]">
      <TitleBar />
      <TopBar />
      <div className="flex min-h-0 flex-1">
        <FlowNavigator />
        <main className="flex min-w-0 flex-1 flex-col">
          <div className="flex h-[25px] shrink-0 items-center justify-between bg-[#c9dbfb] pr-1 pb-0.5 pl-[10px]">
            <h1>
              <b>IMPLEMENTED DESIGN</b> - xc7z020clg400-2
            </h1>
            <Controls names={["Help", "Close"]} className="text-gray-500" />
          </div>
          <div className="flex min-h-0 flex-1 flex-col gap-[11px] pt-2 pr-2 pb-0.5 pl-2">
            <div className="flex min-h-0 flex-1 gap-3">
              <div className="flex w-[136px] shrink-0 flex-col gap-[10px]">
                <SourcesPanel />
                <NetPanel />
              </div>
              <DevicePanel />
            </div>
            <TimingPanel />
          </div>
        </main>
      </div>
      <StatusBar />
      <Taskbar />
      <Watermark />
      <ImeBar />
    </div>
  );
}
